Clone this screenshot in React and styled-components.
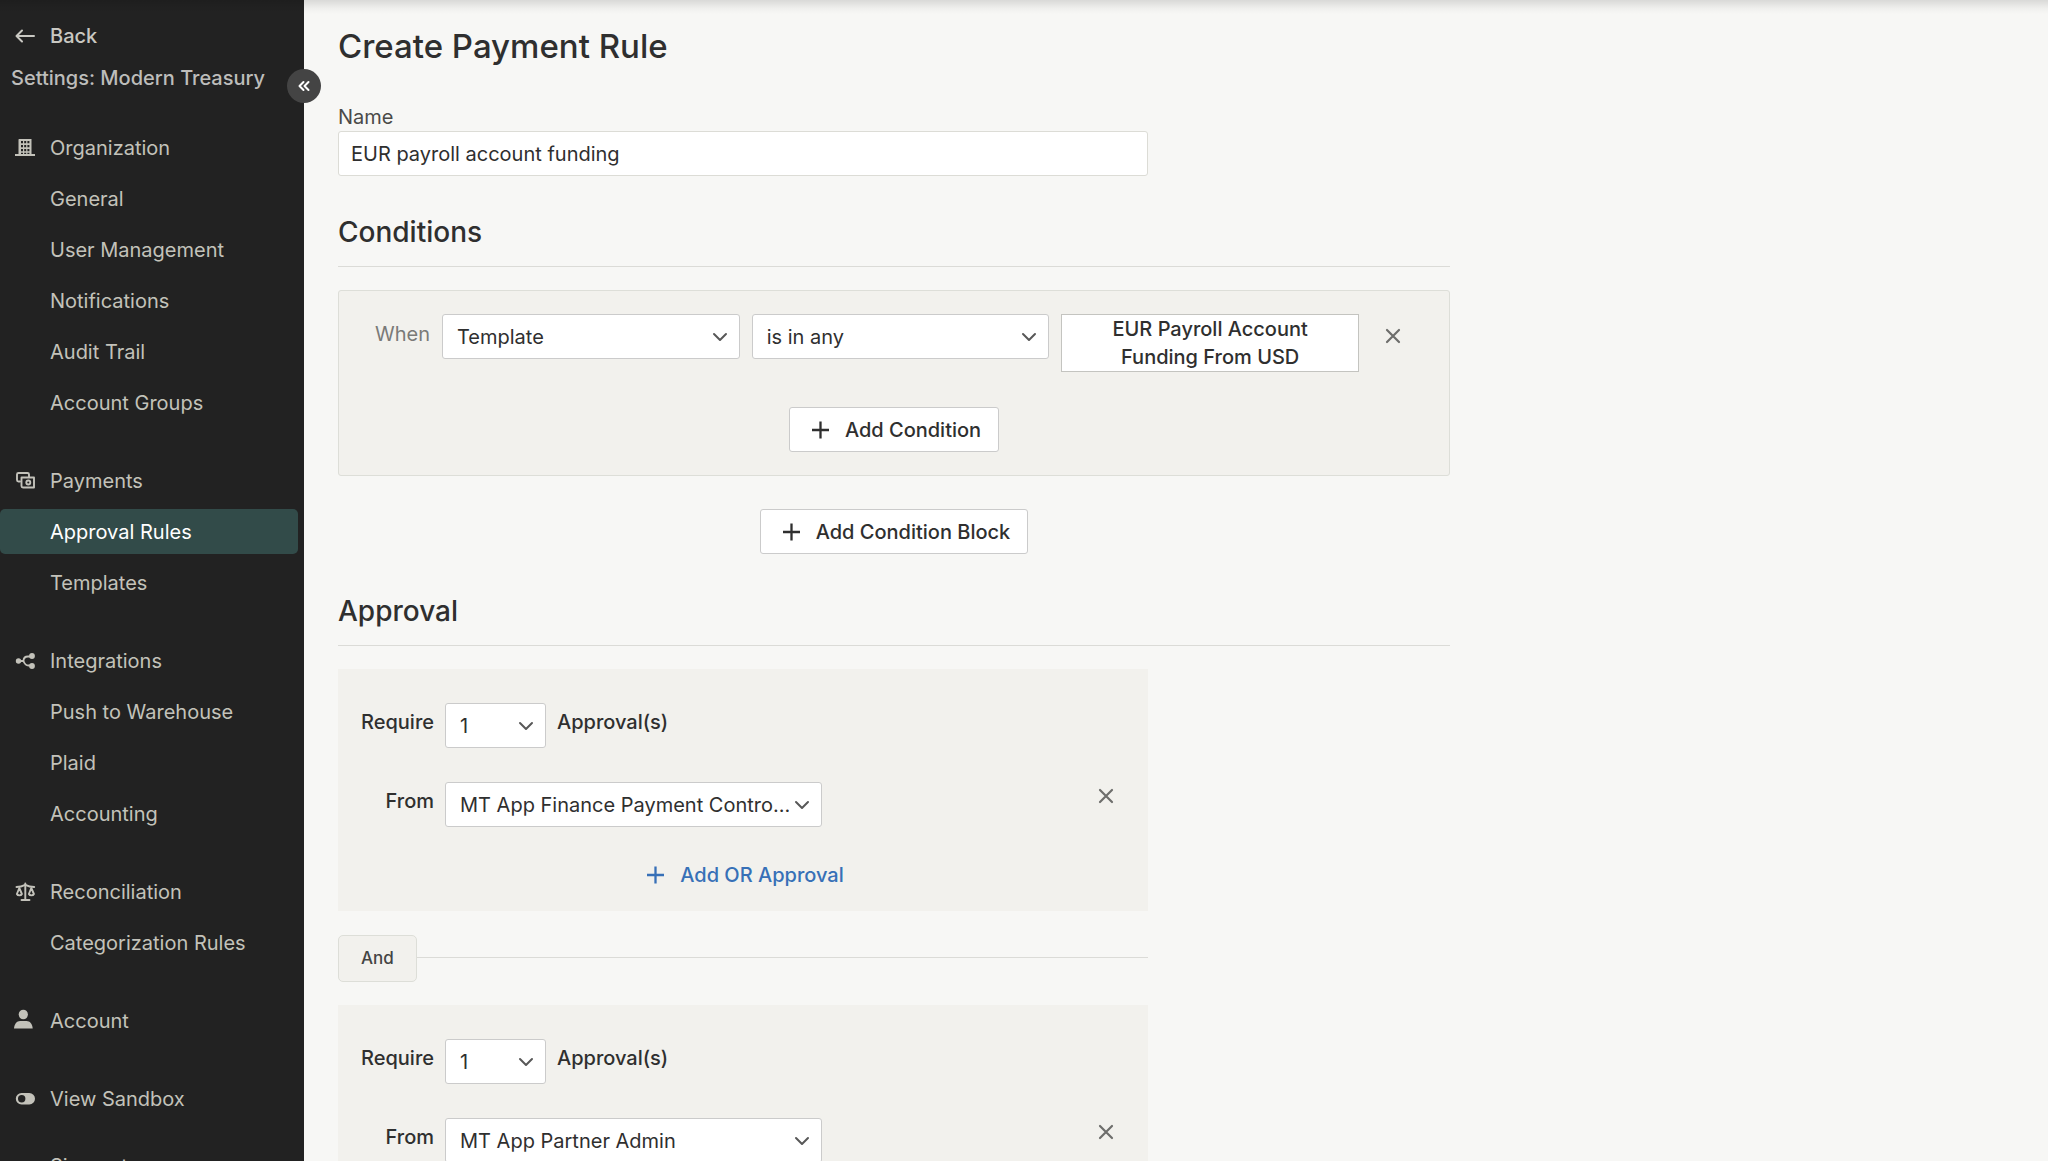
import { useState } from 'react';
import styled, { createGlobalStyle } from 'styled-components';

const GlobalStyle = createGlobalStyle`
  * {
    box-sizing: border-box;
  }
  body {
    margin: 0;
    background-color: #f7f7f5;
    font-family: 'Inter', 'Liberation Sans', sans-serif;
    font-size: 20px;
    line-height: 28px;
    color: #2f2f2f;
  }
  button, input, select {
    font: inherit;
    color: inherit;
    margin: 0;
  }
`;

// Layout
const Page = styled.div`
  position: relative;
  display: flex;
  height: 100vh;
  overflow: hidden;
`;

const TopShadow = styled.div`
  position: absolute;
  top: 0;
  left: 0;
  right: 0;
  height: 14px;
  background: linear-gradient(rgba(0, 0, 0, 0.12), rgba(0, 0, 0, 0.03) 60%, transparent);
  pointer-events: none;
`;

const Sidebar = styled.aside`
  position: relative;
  flex: 0 0 304px;
  background-color: #222222;
  color: #c3c2ba;
`;

const SidebarScroll = styled.div`
  height: 100%;
  overflow: hidden;
`;

const BackLink = styled.a`
  display: flex;
  align-items: center;
  gap: 12px;
  height: 28px;
  margin-top: 22px;
  padding-left: 12px;
  color: #c9c8c2;
  font-weight: 500;
  text-decoration: none;
`;

const SidebarTitle = styled.div`
  margin: 14px 0 33px;
  padding-left: 11px;
  color: #bdbdbb;
  font-weight: 500;
`;

const CollapseButton = styled.button`
  position: absolute;
  top: 69px;
  right: -17px;
  z-index: 1;
  display: flex;
  align-items: center;
  justify-content: center;
  width: 34px;
  height: 34px;
  padding: 0;
  border: 0;
  border-radius: 50%;
  background-color: #444444;
  color: #ffffff;
  cursor: pointer;
`;

const NavGroup = styled.nav`
  display: flex;
  flex-direction: column;
  gap: 6px;
  margin-bottom: ${(props) => (props.$last ? '22px' : '33px')};
`;

const NavItem = styled.a`
  display: flex;
  align-items: center;
  gap: 12px;
  height: 45px;
  margin-right: 6px;
  padding-left: ${(props) => (props.$icon ? '12px' : '50px')};
  border-radius: 5px;
  background-color: ${(props) => (props.$active ? '#324b49' : 'transparent')};
  color: ${(props) => (props.$active ? '#ffffff' : 'inherit')};
  text-decoration: none;
`;

const Main = styled.main`
  flex: 1;
  padding: 23px 34px;
  overflow: auto;
  scrollbar-width: none;
`;

const Content = styled.div`
  max-width: 1112px;
`;

const Narrow = styled.div`
  max-width: 810px;
`;

// Headings
const PageTitle = styled.h1`
  margin: 0 0 34px;
  font-size: 33px;
  line-height: 46px;
  font-weight: 500;
`;

const SectionTitle = styled.h2`
  margin: 0 0 23px;
  padding-bottom: 15px;
  border-bottom: 1px solid #dbdbd7;
  font-size: 28px;
  line-height: 38px;
  font-weight: 500;
`;

// Form controls
const FieldLabel = styled.label`
  display: block;
  color: #4a4a48;
`;

const TextInput = styled.input`
  display: block;
  width: 100%;
  height: 45px;
  margin: 0 0 37px;
  padding: 0 12px;
  border: 1px solid #dcdcd6;
  border-radius: 3px;
  background-color: #ffffff;
`;

const SelectWrapper = styled.div`
  position: relative;
  flex: ${(props) => (props.$width ? `0 0 ${props.$width}` : '1')};
  min-width: 0;
`;

const StyledSelect = styled.select`
  display: block;
  width: 100%;
  height: 45px;
  padding: 0 32px 0 14px;
  border: 1px solid #cbcbcb;
  border-radius: 3px;
  background-color: #ffffff;
  appearance: none;
`;

const SelectArrow = styled.svg`
  position: absolute;
  top: 15px;
  right: 12px;
  color: #585858;
  pointer-events: none;
`;

const OutlineButton = styled.button`
  display: flex;
  align-items: center;
  gap: 12px;
  height: 45px;
  padding: 0 17px;
  border: 1px solid #cbcbcb;
  border-radius: 3px;
  background-color: #ffffff;
  font-weight: 500;
  cursor: pointer;
`;

const LinkButton = styled(OutlineButton)`
  border-color: transparent;
  background-color: transparent;
  color: #3770b7;
`;

const IconButton = styled.button`
  display: flex;
  align-items: center;
  justify-content: center;
  width: 30px;
  height: 30px;
  padding: 0;
  border: 0;
  background: none;
  color: #6e6e6c;
  cursor: pointer;
`;

const ValueButton = styled.button`
  min-width: 0;
  padding: 0 40px;
  border: 1px solid #c4c4c0;
  background-color: #ffffff;
  font-weight: 500;
  text-align: center;
  cursor: pointer;
`;

// Conditions
const ConditionPanel = styled.section`
  padding: 23px 41px 23px 24px;
  border: 1px solid #ddded8;
  border-radius: 3px;
  background-color: #f2f1ed;
`;

const ConditionRow = styled.div`
  display: grid;
  grid-template-columns: 67px repeat(3, minmax(0, 1fr)) 37px;
  align-items: start;
  gap: 12px;
  margin-bottom: 35px;

  ${IconButton} {
    margin: 7px 0 0 7px;
  }
`;

const WhenLabel = styled.label`
  padding-top: 6px;
  color: #7a7a78;
  text-align: right;
`;

const ButtonRow = styled.div`
  display: flex;
  justify-content: center;
  margin-bottom: ${(props) => (props.$spaced ? '38px' : '0')};
  padding-top: ${(props) => (props.$spaced ? '33px' : '0')};
`;

const ConditionButtonRow = styled(ButtonRow)`
  margin-right: -17px;
`;

// Approvals
const ApprovalPanel = styled.section`
  padding: 34px 23px 14px;
  background-color: #f2f1ed;
`;

const ApprovalRow = styled.div`
  display: flex;
  align-items: flex-start;
  gap: 11px;
  margin-bottom: ${(props) => (props.$last ? '25px' : '34px')};

  ${IconButton} {
    margin: -1px 4px 0 auto;
  }
`;

const ApprovalLabel = styled.label`
  flex: ${(props) => (props.$suffix ? 'none' : '0 0 73px')};
  padding-top: 5px;
  font-weight: 500;
  text-align: right;
`;

const AndDivider = styled.div`
  display: flex;
  align-items: center;
  margin: 24px 0 23px;

  &:after {
    content: '';
    flex: 1;
    height: 1px;
    margin-bottom: 3px;
    background-color: #dbdbd7;
  }
`;

const AndTag = styled.span`
  padding: 9px 22px;
  border: 1px solid #ddded8;
  border-radius: 5px;
  background-color: #f2f1ed;
  color: #444444;
  font-size: 17px;
  line-height: 27px;
  font-weight: 500;
`;

// Icons
const Svg = ({ size = 26, children, ...rest }) => (
  <svg
    width={size}
    height={size}
    viewBox={`0 0 ${size} ${size}`}
    fill="none"
    stroke="currentColor"
    strokeWidth="2"
    strokeLinecap="round"
    strokeLinejoin="round"
    aria-hidden="true"
    {...rest}
  >
    {children}
  </svg>
);

const BackIcon = () => (
  <Svg>
    <path d="M22 13H5M10 7.5L4.5 13l5.5 5.5" />
  </Svg>
);

const BuildingIcon = () => (
  <Svg stroke="none">
    <path
      fill="currentColor"
      fillRule="evenodd"
      d="M7 4h12.500v15H23v2H3v-2h3.500V4.500zM9 6v2.200h2V6zM12.200 6v2.200h2V6zM15.400 6v2.200h2V6zM9 10v2.200h2V10zM12.200 10v2.200h2V10zM15.400 10v2.200h2V10zM9 14v2.200h2V14zM15.400 14v2.200h2V14zM12.200 14v2.200h2V14zM9 17.700V19h2v-1.300zM12.200 17.700V19h2v-1.300zM15.400 17.700V19h2v-1.300z"
    />
  </Svg>
);

const PaymentsIcon = () => (
  <Svg strokeWidth="1.900">
    <path d="M8 13.500H6.500A1.500 1.500 0 0 1 5 12V6.500A1.500 1.500 0 0 1 6.500 5H15.500A1.500 1.500 0 0 1 17 6.500V9" />
    <path d="M9.500 9.500h12.500v10H11A1.500 1.500 0 0 1 9.500 18z" />
    <circle cx="16.300" cy="14.500" r="2" />
  </Svg>
);

const IntegrationsIcon = () => (
  <Svg>
    <circle cx="6.500" cy="13" r="2.700" fill="currentColor" stroke="none" />
    <circle cx="20" cy="8" r="2.900" fill="currentColor" stroke="none" />
    <circle cx="20" cy="18" r="2.900" fill="currentColor" stroke="none" />
    <path d="M7 13h4.500c0-3 2-4.500 4.500-4.500h3M11.500 13c1 3 2.500 4.500 5 4.500h3" strokeWidth="1.800" />
  </Svg>
);

const ScaleIcon = () => (
  <Svg strokeWidth="1.900">
    <path d="M13.300 4.500v16M9.500 21h8" />
    <path d="M4.500 8c3.500 0 6-.8 8.800-2.200C16 7.200 18.500 8 22.200 8" />
    <path d="M7.300 9l-2.400 6c.8 1.800 4.200 1.800 5 0zM19.300 9l-2.400 6c.8 1.800 4.200 1.800 5 0z" />
  </Svg>
);

const PersonIcon = () => (
  <Svg stroke="none">
    <ellipse cx="11.300" cy="6.500" rx="4.600" ry="4.800" fill="currentColor" />
    <path fill="currentColor" d="M2 20.500c.4-4.800 3-7.500 6-7.500h6.600c3.200 0 5.700 2.700 6.100 7.500z" />
  </Svg>
);

const SandboxIcon = () => (
  <Svg stroke="none">
    <path
      fill="currentColor"
      fillRule="evenodd"
      d="M9.500 7h7.800a5.700 5.700 0 0 1 0 11.400H9.500a5.700 5.700 0 0 1 0-11.400zM9.700 9a3.700 3.700 0 1 0 0 7.400 3.700 3.700 0 0 0 0-7.400z"
    />
  </Svg>
);

const PlusIcon = () => (
  <Svg strokeWidth="2.300" strokeLinecap="butt">
    <path d="M13.500 4.500v17M5 13h17" />
  </Svg>
);

const CloseIcon = () => (
  <Svg strokeWidth="2.200">
    <path d="M7 7l12 12M19 7L7 19" />
  </Svg>
);

const Select = ({ id, width, value, label }) => (
  <SelectWrapper $width={width}>
    <StyledSelect id={id} defaultValue={value} aria-label={label}>
      <option>{value}</option>
    </StyledSelect>
    <SelectArrow
      width="16"
      height="16"
      viewBox="0 0 16 16"
      fill="none"
      stroke="currentColor"
      strokeWidth="2"
      strokeLinecap="round"
      strokeLinejoin="round"
    >
      <path d="M2 5l6 6 6-6" />
    </SelectArrow>
  </SelectWrapper>
);

const navGroups = [
  {
    title: 'Organization',
    icon: BuildingIcon,
    items: ['General', 'User Management', 'Notifications', 'Audit Trail', 'Account Groups'],
  },
  { title: 'Payments', icon: PaymentsIcon, items: ['Approval Rules', 'Templates'] },
  { title: 'Integrations', icon: IntegrationsIcon, items: ['Push to Warehouse', 'Plaid', 'Accounting'] },
  { title: 'Reconciliation', icon: ScaleIcon, items: ['Categorization Rules'] },
  { title: 'Account', icon: PersonIcon, items: [] },
  { title: 'View Sandbox', icon: SandboxIcon, items: [], last: true },
];

const approvals = [
  { id: 'approval-1', from: 'MT App Finance Payment Contro...' },
  { id: 'approval-2', from: 'MT App Partner Admin' },
];

const Approval = ({ id, from }) => (
  <ApprovalPanel>
    <ApprovalRow>
      <ApprovalLabel htmlFor={`${id}-count`}>Require</ApprovalLabel>
      <Select id={`${id}-count`} width="101px" value="1" />
      <ApprovalLabel as="span" $suffix>Approval(s)</ApprovalLabel>
    </ApprovalRow>
    <ApprovalRow $last>
      <ApprovalLabel htmlFor={`${id}-from`}>From</ApprovalLabel>
      <Select id={`${id}-from`} width="377px" value={from} />
      <IconButton type="button" aria-label="Remove approval">
        <CloseIcon />
      </IconButton>
    </ApprovalRow>
    <ButtonRow>
      <LinkButton type="button">
        <PlusIcon />
        Add OR Approval
      </LinkButton>
    </ButtonRow>
  </ApprovalPanel>
);

const App = () => {
  const [name, setName] = useState('EUR payroll account funding');
  const [active, setActive] = useState('Approval Rules');

  return (
    <Page>
      <GlobalStyle />
      <Sidebar>
        <SidebarScroll>
          <BackLink href="#back">
            <BackIcon />
            Back
          </BackLink>
          <SidebarTitle>Settings: Modern Treasury</SidebarTitle>
          {navGroups.map(({ title, icon: Icon, items, last }) => (
            <NavGroup key={title} $last={last}>
              <NavItem href="#section" $icon>
                <Icon />
                {title}
              </NavItem>
              {items.map((item) => (
                <NavItem
                  key={item}
                  href="#item"
                  $active={item === active}
                  onClick={() => setActive(item)}
                >
                  {item}
                </NavItem>
              ))}
            </NavGroup>
          ))}
          <NavItem href="#signout">Sign out</NavItem>
        </SidebarScroll>
        <CollapseButton type="button" aria-label="Collapse sidebar">
          <Svg size={16}>
            <path d="M7.500 4L3.500 8l4 4M12.500 4l-4 4 4 4" />
          </Svg>
        </CollapseButton>
      </Sidebar>

      <Main>
        <Content>
          <PageTitle>Create Payment Rule</PageTitle>
          <Narrow>
            <FieldLabel htmlFor="rule-name">Name</FieldLabel>
            <TextInput id="rule-name" value={name} onChange={(e) => setName(e.target.value)} />
          </Narrow>

          <SectionTitle>Conditions</SectionTitle>
          <ConditionPanel>
            <ConditionRow>
              <WhenLabel htmlFor="condition-field">When</WhenLabel>
              <Select id="condition-field" value="Template" />
              <Select label="Operator" value="is in any" />
              <ValueButton type="button">EUR Payroll Account Funding From USD</ValueButton>
              <IconButton type="button" aria-label="Remove condition">
                <CloseIcon />
              </IconButton>
            </ConditionRow>
            <ConditionButtonRow>
              <OutlineButton type="button">
                <PlusIcon />
                Add Condition
              </OutlineButton>
            </ConditionButtonRow>
          </ConditionPanel>
          <ButtonRow $spaced>
            <OutlineButton type="button">
              <PlusIcon />
              Add Condition Block
            </OutlineButton>
          </ButtonRow>

          <SectionTitle>Approval</SectionTitle>
          <Narrow>
            <Approval {...approvals[0]} />
            <AndDivider>
              <AndTag>And</AndTag>
            </AndDivider>
            <Approval {...approvals[1]} />
          </Narrow>
        </Content>
      </Main>
      <TopShadow />
    </Page>
  );
};

export default App;
